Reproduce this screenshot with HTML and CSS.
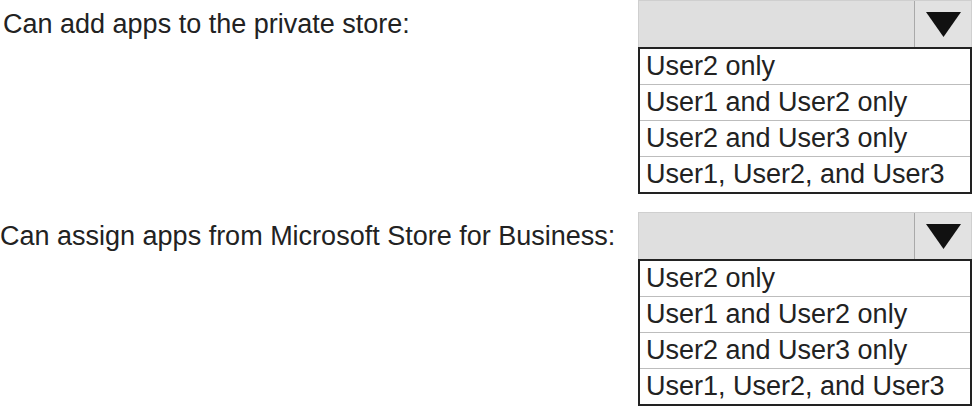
FILE: index.html
```
<!DOCTYPE html>
<html lang="en">

<head>
  <meta charset="UTF-8" />
  <meta name="viewport" content="width=device-width, initial-scale=1.0" />
  <title>Answer Area</title>
  <link rel="stylesheet" href="styles.css">
</head>

<body>
  <div class="answer_area">

    <!-- First statement -->
    <div class="question question_first">
      <div class="prompt">Can add apps to the private store:</div>
      <div class="dropdown">
        <div class="select_box">
          <div class="select_value"></div>
          <div class="select_arrow">
            <svg width="35" height="25" viewBox="0 0 35 25"><polygon points="0,0 35,0 17.5,25" fill="#111" /></svg>
          </div>
        </div>
        <ul class="option_list">
          <li>User2 only</li>
          <li>User1 and User2 only</li>
          <li>User2 and User3 only</li>
          <li>User1, User2, and User3</li>
        </ul>
      </div>
    </div>

    <!-- Second statement -->
    <div class="question">
      <div class="prompt">Can assign apps from Microsoft Store for Business:</div>
      <div class="dropdown">
        <div class="select_box">
          <div class="select_value"></div>
          <div class="select_arrow">
            <svg width="35" height="25" viewBox="0 0 35 25"><polygon points="0,0 35,0 17.5,25" fill="#111" /></svg>
          </div>
        </div>
        <ul class="option_list">
          <li>User2 only</li>
          <li>User1 and User2 only</li>
          <li>User2 and User3 only</li>
          <li>User1, User2, and User3</li>
        </ul>
      </div>
    </div>

  </div>
</body>

</html>
```

FILE: styles.css
```
body {
  margin: 0;
  background-color: #fff;
  font-family: 'Liberation Sans', Arial, sans-serif;
  color: #222;
}

.answer_area {
  width: 972px;
  display: flex;
  flex-direction: column;
  gap: 18px;
}

.question {
  display: flex;
  align-items: flex-start;
}

.prompt {
  flex: 1;
  height: 47px;
  display: flex;
  align-items: center;
  padding-top: 2px;
  box-sizing: border-box;
  font-size: 27px;
  white-space: nowrap;
}

.question_first .prompt {
  padding-left: 3px;
}

.dropdown {
  width: 334px;
}

.select_box {
  display: flex;
  height: 47px;
  box-sizing: border-box;
  border: 1px solid #cfcfcf;
  border-bottom: 0;
  background-color: #dfdfdf;
}

.select_value {
  flex: 1;
}

.select_arrow {
  width: 56px;
  display: flex;
  align-items: center;
  justify-content: center;
  border-left: 1px solid #a9a9a9;
  background-color: #e2e2e2;
}

.option_list {
  list-style: none;
  margin: 0;
  padding: 0;
  border: 2px solid #222;
  background-color: #fff;
}

.option_list li {
  height: 35px;
  line-height: 35px;
  padding-left: 6px;
  font-size: 27px;
  white-space: nowrap;
}

.option_list li + li {
  border-top: 1px solid #bdbdbd;
}
```
